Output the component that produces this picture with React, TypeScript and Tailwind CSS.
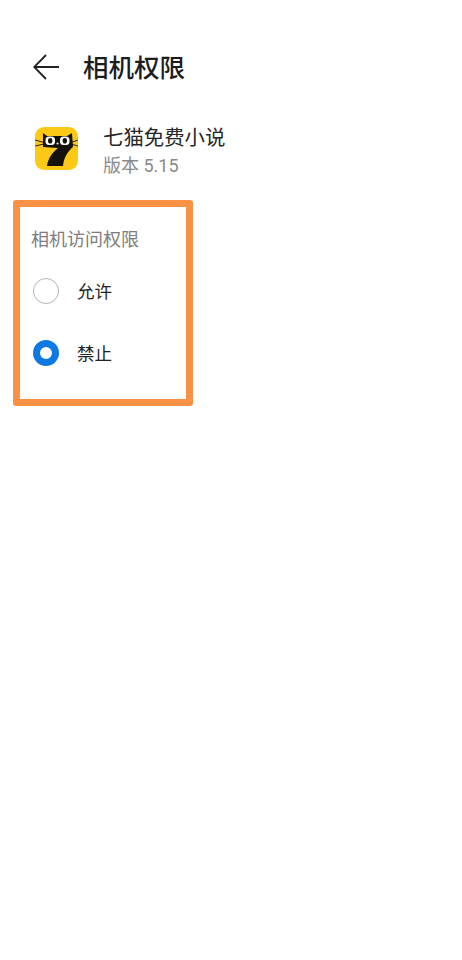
import React from "react";

const cjk = "font-['Noto_Sans_CJK_SC','Noto_Sans',sans-serif]";

const AppIcon = () => (
  <svg width="43" height="43" viewBox="0 0 43 43">
    <rect width="43" height="43" rx="9" fill="#fbc916" />
    {/* head + the 7 */}
    <path d="M8 6 L12 9 H32 L37 6 L38 20 C33 24 29 30 28 39 H12 C13 31 18 25 23 21 L8 20 Z" fill="#15120c" />
    {/* eyes */}
    <rect x="10.5" y="9.5" width="9.5" height="8.5" rx="3.5" fill="#fff" />
    <rect x="25" y="9.5" width="9.5" height="8.5" rx="3.5" fill="#fff" />
    <ellipse cx="15.2" cy="13.8" rx="2.2" ry="2.8" fill="#15120c" />
    <ellipse cx="29.8" cy="13.8" rx="2.2" ry="2.8" fill="#15120c" />
    <circle cx="22.5" cy="16.5" r="1" fill="#fff" />
    {/* whiskers */}
    <path d="M0 13 L9 15.5 M0 19 L9 17 M36 15.5 L43 13 M36 17 L43 19" stroke="#15120c" strokeWidth="0.9" />
  </svg>
);

const Radio = ({ checked }: { checked: boolean }) =>
  checked ? (
    <div className="w-[26px] h-[26px] rounded-full border-[7px] border-[#0f79e3] bg-white" />
  ) : (
    <div className="w-[26px] h-[26px] rounded-full border border-[#b5b5b5] bg-white" />
  );

const options = [
  { label: "允许", checked: false },
  { label: "禁止", checked: true },
];

export default function App() {
  return (
    <div className={`${cjk} w-[462px] h-[960px] bg-white overflow-hidden pt-[54px]`}>
      {/* header */}
      <div className="flex items-center h-[26px] pl-[33px]">
        <svg width="26" height="26" viewBox="0 0 26 26" fill="none" stroke="#222" strokeWidth="1.8">
          <path d="M26 13 H1.5 M13 1 L1.2 13 L13 25" />
        </svg>
        <h1 className="ml-[24px] -mt-[2px] text-[25.5px] leading-[26px] font-medium text-[#1d1d1d]">相机权限</h1>
      </div>

      {/* app info */}
      <div className="flex items-start mt-[42px] pl-[35px]">
        <div className="mt-[5px]">
          <AppIcon />
        </div>
        <div className="ml-[25px]">
          <div className="text-[20.4px] leading-[28px] text-[#262626]">七猫免费小说</div>
          <div className="mt-[3px] text-[18px] leading-[26px] text-[#8a8a8a] font-['Roboto','Noto_Sans_CJK_SC',sans-serif]">版本 5.15</div>
        </div>
      </div>

      {/* permission box */}
      <div className="ml-[13px] mt-[21px] w-[180px] h-[206px] border-[7px] border-[#fb9145] rounded-[3px] pl-[11px] pt-[18px]">
        <div className="text-[18px] leading-[26px] text-[#7d7d7d]">相机访问权限</div>
        <div className="mt-[27px] flex flex-col gap-[36px] pl-[2px]">
          {options.map((o) => (
            <div key={o.label} className="flex items-center gap-[18px]">
              <Radio checked={o.checked} />
              <span className="text-[17.5px] leading-[26px] text-[#222]">{o.label}</span>
            </div>
          ))}
        </div>
      </div>
    </div>
  );
}
